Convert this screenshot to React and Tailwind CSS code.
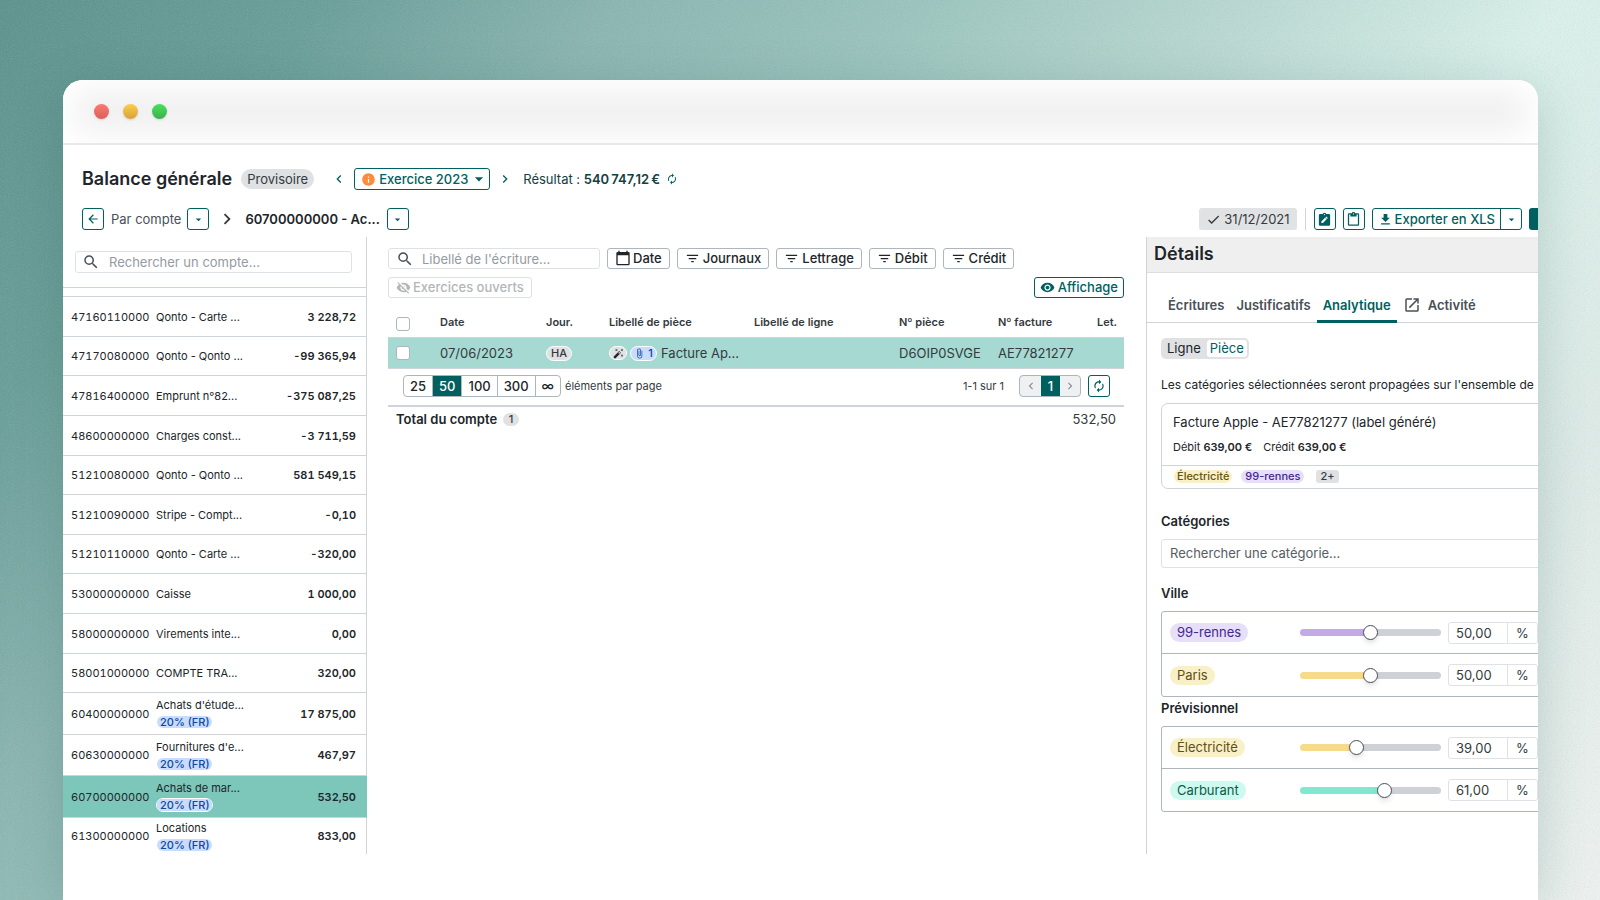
import React, { useState } from 'react';
import {
  MdArrowBack,
  MdArrowDropDown,
  MdAttachFile,
  MdAutoFixHigh,
  MdAutorenew,
  MdCheck,
  MdChevronLeft,
  MdChevronRight,
  MdContentPaste,
  MdFileDownload,
  MdFilterList,
  MdInfo,
  MdOpenInNew,
  MdSearch,
  MdVisibility,
  MdVisibilityOff,
} from 'react-icons/md';

const accounts = [
  { id: '47160110000', name: 'Qonto - Carte ...', amount: '3 228,72', height: 'h-10' },
  { id: '47170080000', name: 'Qonto - Qonto ...', amount: '-99 365,94', height: 'h-[39px]' },
  { id: '47816400000', name: 'Emprunt n°82...', amount: '-375 087,25', height: 'h-10' },
  { id: '48600000000', name: 'Charges const...', amount: '-3 711,59', height: 'h-10' },
  { id: '51210080000', name: 'Qonto - Qonto ...', amount: '581 549,15', height: 'h-[39px]' },
  { id: '51210090000', name: 'Stripe - Compt...', amount: '-0,10', height: 'h-10' },
  { id: '51210110000', name: 'Qonto - Carte ...', amount: '-320,00', height: 'h-[39px]' },
  { id: '53000000000', name: 'Caisse', amount: '1 000,00', height: 'h-10' },
  { id: '58000000000', name: 'Virements inte...', amount: '0,00', height: 'h-10' },
  { id: '58001000000', name: 'COMPTE TRA...', amount: '320,00', height: 'h-[39px]' },
  { id: '60400000000', name: "Achats d'étude...", amount: '17 875,00', tax: '20% (FR)', height: 'h-[42px]' },
  { id: '60630000000', name: "Fournitures d'e...", amount: '467,97', tax: '20% (FR)', height: 'h-[41px]' },
  { id: '60700000000', name: 'Achats de mar...', amount: '532,50', tax: '20% (FR)', height: 'h-[42px]', active: true },
  { id: '61300000000', name: 'Locations', amount: '833,00', tax: '20% (FR)', height: 'h-[36px]', last: true },
];

const iconButton =
  'flex h-[22px] w-[22px] shrink-0 items-center justify-center rounded-[3px] border border-[#005f5f] bg-white text-[#005f5f]';

const filterButton =
  'flex h-[21px] items-center rounded-[3px] border border-[#adb5bd] bg-white px-[7px] pb-px text-[13px] leading-[18px] font-medium text-[#212529]';

function TitleBar() {
  return (
    <div className="flex h-[65px] items-center gap-[14px] border-b-2 border-[#e9e9e9] bg-[#efefef] pl-[31px] shadow-[inset_0_0_32px_12px_#ffffff]">
      <span className="size-[15px] rounded-full bg-linear-to-b from-[#fb7a72] to-[#d9605a] shadow-sm" />
      <span className="size-[15px] rounded-full bg-linear-to-b from-[#fbcf4b] to-[#d9a03c] shadow-sm" />
      <span className="size-[15px] rounded-full bg-linear-to-b from-[#48e05e] to-[#3bb04c] shadow-sm" />
    </div>
  );
}

function Header() {
  return (
    <header className="flex flex-col pt-[23px] pl-[19px]">
      <div className="flex h-[22px] items-center">
        <h1 className="text-[18px] leading-[22px] font-semibold text-[#212529]">Balance générale</h1>
        <span className="ml-[9px] rounded-full bg-[#dfe1e3] px-[6px] text-[13px] leading-5 text-[#343a40]">Provisoire</span>
        <button aria-label="Exercice précédent" className="ml-[17px] text-[#005f5f]">
          <MdChevronLeft size={16} />
        </button>
        <div className="relative ml-[7px] flex h-[22px] items-center rounded-[3px] border border-[#005f5f] pl-[6px] text-[#005f5f]">
          <MdInfo size={15} className="text-[#fd8b3d]" />
          <select
            aria-label="Exercice"
            className="w-[113px] appearance-none bg-transparent pl-[3px] text-[13px] leading-5 font-medium outline-none"
          >
            <option>Exercice 2023</option>
          </select>
          <MdArrowDropDown size={20} className="pointer-events-none absolute right-0" />
        </div>
        <button aria-label="Exercice suivant" className="ml-[7px] text-[#005f5f]">
          <MdChevronRight size={16} />
        </button>
        <p className="ml-[10px] text-[13px] leading-5 text-[#14403f]">
          Résultat : <strong className="font-semibold">{'540\u202f747,12\u202f€'}</strong>
        </p>
        <button aria-label="Actualiser le résultat" className="ml-[6px] text-[#005f5f]">
          <MdAutorenew size={12} />
        </button>
      </div>
      <div className="mt-[18px] mb-[7px] flex h-[22px] items-center">
        <button aria-label="Retour" className={iconButton}>
          <MdArrowBack size={14} />
        </button>
        <span className="ml-[7px] text-[13px] leading-5 text-[#495057]">Par compte</span>
        <button aria-label="Choisir la vue" className={`${iconButton} ml-[6px]`}>
          <MdArrowDropDown size={13} />
        </button>
        <MdChevronRight size={22} className="ml-[7px] text-[#343a40]" />
        <span className="ml-[7px] text-[13px] leading-5 font-semibold text-[#212529]">60700000000 - Ac...</span>
        <button aria-label="Choisir le compte" className={`${iconButton} ml-[7px]`}>
          <MdArrowDropDown size={13} />
        </button>
        <div className="ml-auto flex items-center">
          <span className="flex h-[22px] items-center gap-[3px] rounded-[3px] bg-[#e1e2e3] px-[7px] text-[13px] leading-5 text-[#343a40]">
            <MdCheck size={15} />
            31/12/2021
          </span>
          <span className="mx-2 h-[22px] w-px bg-[#ced4da]" />
          <button aria-label="Notes" className={iconButton}>
            <svg viewBox="0 0 24 24" className="size-[15px]" fill="currentColor">
              <path d="M19 3h-4.18A3 3 0 0 0 12 1a3 3 0 0 0-2.82 2H5a2 2 0 0 0-2 2v15a2 2 0 0 0 2 2h14a2 2 0 0 0 2-2V5a2 2 0 0 0-2-2zm-7 0a1 1 0 1 1 0 2 1 1 0 0 1 0-2zM9.5 17.5H7V15l5.8-5.8 2.5 2.5zm7.4-7.4-1 1-2.5-2.5 1-1a.7.7 0 0 1 1 0l1.5 1.5a.7.7 0 0 1 0 1z" />
            </svg>
          </button>
          <button aria-label="Presse-papiers" className={`${iconButton} ml-[7px]`}>
            <MdContentPaste size={15} />
          </button>
          <div className="ml-[7px] flex h-[22px] items-center rounded-[3px] border border-[#005f5f] text-[#005f5f]">
            <button className="flex items-center gap-[2px] px-[5px] text-[13px] leading-5 font-medium">
              <MdFileDownload size={15} />
              Exporter en XLS
            </button>
            <button aria-label="Autres exports" className="flex h-5 w-[21px] items-center justify-center border-l border-[#005f5f]">
              <MdArrowDropDown size={13} />
            </button>
          </div>
          <button aria-label="Ajouter" className="ml-[7px] h-[22px] w-[41px] rounded-[3px] bg-[#005f5f]" />
        </div>
      </div>
    </header>
  );
}

function TaxBadge({ children, outlined }) {
  return (
    <span
      className={`block w-fit rounded-full border bg-[#c9dcfd] bg-clip-padding px-[3px] text-[11px] leading-3 font-medium text-[#0b4a9c] ${
        outlined ? 'border-white' : 'border-transparent'
      }`}
    >
      {children}
    </span>
  );
}

function AccountList() {
  return (
    <aside className="flex w-[304px] shrink-0 flex-col">
      <div className="border-r border-b border-[#ced4da] px-3 pt-[14px] pb-[14px]">
        <div className="mr-[2px] flex h-[22px] items-center rounded-[3px] border border-[#dee2e6] pl-[6px]">
          <MdSearch size={18} className="shrink-0 text-[#495057]" />
          <input
            type="text"
            aria-label="Rechercher un compte"
            placeholder="Rechercher un compte..."
            className="ml-[9px] w-full min-w-0 text-[13px] leading-5 outline-none placeholder:text-[#949ba2]"
          />
        </div>
      </div>
      <div className="h-[9px] border-r border-b border-[#ced4da]" />
      <table className="w-full table-fixed border-separate border-spacing-0 text-[11px] leading-[14px] text-[#212529]">
        <tbody>
          {accounts.map((a) => {
            const line = a.last ? '' : 'border-b';
            return (
              <tr key={a.id} className={`${a.height} ${a.active ? 'bg-[#7cc6ba]' : ''}`}>
                <td className={`w-[93px] border-[#ced4da] py-0 pl-[8px] tabular-nums ${line}`}>{a.id}</td>
                <td className={`border-[#ced4da] p-0 whitespace-nowrap ${line}`}>
                  <div className="flex flex-col gap-[3px]">
                    {a.name}
                    {a.tax && <TaxBadge outlined={a.active}>{a.tax}</TaxBadge>}
                  </div>
                </td>
                <td
                  className={`w-[100px] border-r py-0 pr-[10px] text-right font-semibold whitespace-nowrap tabular-nums ${line} ${
                    a.active ? 'border-r-[#7cc6ba] border-b-[#ced4da]' : 'border-[#ced4da]'
                  }`}
                >
                  {a.amount}
                </td>
              </tr>
            );
          })}
        </tbody>
      </table>
    </aside>
  );
}

function Checkbox({ label }) {
  return (
    <input
      type="checkbox"
      aria-label={label}
      className="block size-[14px] appearance-none rounded-[3px] border border-[#adb5bd] bg-white checked:bg-[#005f5f]"
    />
  );
}

function Entries() {
  const pageSizes = ['25', '50', '100', '300'];
  return (
    <main className="flex min-w-0 flex-1 flex-col pt-[11px] pr-[22px] pl-[21px]">
      <div className="flex items-center gap-[7px]">
        <div className="flex h-[21px] w-[212px] items-center rounded-[3px] border border-[#dee2e6] pl-[7px]">
          <MdSearch size={18} className="shrink-0 text-[#495057]" />
          <input
            type="text"
            aria-label="Libellé de l'écriture"
            placeholder="Libellé de l'écriture..."
            className="ml-[8px] w-full min-w-0 text-[13px] leading-[18px] outline-none placeholder:text-[#949ba2]"
          />
        </div>
        <button className={filterButton}>
          <svg viewBox="0 0 24 24" className="mr-[2px] size-4" fill="currentColor">
            <path d="M20 3h-1V1h-2v2H7V1H5v2H4a2 2 0 0 0-2 2v16c0 1.100.9 2 2 2h16a2 2 0 0 0 2-2V5a2 2 0 0 0-2-2zm0 18H4V8h16z" />
          </svg>
          Date
        </button>
        {['Journaux', 'Lettrage', 'Débit', 'Crédit'].map((f) => (
          <button key={f} className={filterButton}>
            <MdFilterList size={15} className="mr-[3px]" />
            {f}
          </button>
        ))}
      </div>
      <div className="mt-2 flex items-center justify-between">
        <button
          disabled
          className="flex h-[21px] items-center gap-[2px] rounded-[3px] border border-[#dee2e6] px-[7px] pb-px text-[13px] leading-[18px] font-medium text-[#b3b6b9]"
        >
          <MdVisibilityOff size={15} />
          Exercices ouverts
        </button>
        <button className="flex h-[21px] items-center gap-[3px] rounded-[3px] border border-[#005f5f] px-[5px] pb-px text-[13px] leading-[18px] font-medium text-[#005f5f]">
          <MdVisibility size={15} />
          Affichage
        </button>
      </div>

      <table className="mt-[9px] w-full table-fixed border-separate border-spacing-0 text-left whitespace-nowrap">
        <thead className="text-[11px] leading-[14px] text-[#343a40]">
          <tr className="h-[31px] *:border-b *:border-[#ced4da] *:p-0 *:pl-2 *:font-semibold">
            <th className="w-11 !pt-[3px]">
              <Checkbox label="Tout sélectionner" />
            </th>
            <th className="w-[106px]">Date</th>
            <th className="w-[63px]">Jour.</th>
            <th>Libellé de pièce</th>
            <th>Libellé de ligne</th>
            <th className="w-[99px]">Nº pièce</th>
            <th className="w-[99px]">Nº facture</th>
            <th className="w-[35px]">Let.</th>
          </tr>
        </thead>
        <tbody className="text-[13px] leading-[18px] text-[#343a40]">
          <tr className="h-[31px] bg-[#a6d9d1] *:border-b *:border-[#ced4da] *:p-0 *:pl-2">
            <td>
              <Checkbox label="Sélectionner la ligne" />
            </td>
            <td>07/06/2023</td>
            <td>
              <span className="block w-fit rounded-full border border-white bg-[#dfe1e3] px-1 text-[11px] leading-[13px] font-medium">HA</span>
            </td>
            <td>
              <div className="flex items-center">
                <span className="flex h-[14px] w-[18px] items-center justify-center rounded-full border border-white bg-[#dfe1e3] text-[#212529]">
                  <MdAutoFixHigh size={11} />
                </span>
                <span className="ml-[3px] flex h-[15px] w-[27px] items-center justify-center gap-[3px] rounded-full border border-white bg-[#c9dcfd] text-[11px] leading-[13px] font-medium text-[#0b4a9c]">
                  <MdAttachFile size={11} />1
                </span>
                <span className="ml-[4px]">Facture Ap...</span>
              </div>
            </td>
            <td />
            <td>D6OIP0SVGE</td>
            <td>AE77821277</td>
            <td />
          </tr>
        </tbody>
      </table>

      <div className="mt-[6px] flex h-[22px] items-center pr-[14px] pl-[15px]">
        <div className="flex h-[22px] divide-x divide-[#adb5bd] overflow-hidden rounded-[4px] border border-[#adb5bd] text-[13px] leading-5 font-medium text-[#212529]">
          {pageSizes.map((s) => (
            <button key={s} className={s === '50' ? 'bg-[#005f5f] px-[6px] text-white' : 'px-[6px]'}>
              {s}
            </button>
          ))}
          <button className="px-[6px]">∞</button>
        </div>
        <span className="ml-1 text-[11px] leading-[14px] text-[#343a40]">éléments par page</span>
        <span className="ml-auto text-[11px] leading-[14px] text-[#343a40]">1-1 sur 1</span>
        <div className="ml-[15px] flex h-[22px] overflow-hidden rounded-[4px] border border-[#adb5bd] bg-[#eff0f1] text-[13px] leading-5 text-[#868e96]">
          <button disabled aria-label="Page précédente" className="flex w-[21px] items-center justify-center">
            <MdChevronLeft size={14} />
          </button>
          <button className="w-[19px] bg-[#005f5f] font-medium text-white">1</button>
          <button disabled aria-label="Page suivante" className="flex w-5 items-center justify-center">
            <MdChevronRight size={14} />
          </button>
        </div>
        <button aria-label="Actualiser" className={`${iconButton} ml-[7px]`}>
          <MdAutorenew size={14} />
        </button>
      </div>

      <div className="mt-2 flex items-center border-t-2 border-[#ced4da] px-2 pt-[3px]">
        <span className="text-[13px] leading-[18px] font-semibold text-[#212529]">Total du compte</span>
        <span className="ml-[6px] w-4 rounded-full bg-[#dfe1e3] text-center text-[11px] leading-[13px] font-medium text-[#343a40]">1</span>
        <span className="ml-auto text-[13px] leading-[18px] text-[#343a40]">532,50</span>
      </div>
    </main>
  );
}

function Allocation({ label, badge, color, initial }) {
  const [value, setValue] = useState(initial);
  return (
    <div className="flex h-[42px] items-center border-b border-[#adb5bd] pl-2 last:border-b-0">
      <span className={`rounded-full px-[7px] text-[13px] leading-[19px] ${badge}`}>{label}</span>
      <input
        type="range"
        min="0"
        max="100"
        value={value}
        onChange={(e) => setValue(Number(e.target.value))}
        aria-label={`Répartition ${label}`}
        style={{ background: `linear-gradient(to right, ${color} ${value}%, #ced2d6 ${value}%)` }}
        className="ml-auto h-[7px] w-[141px] appearance-none rounded-full [&::-webkit-slider-thumb]:size-[15px] [&::-webkit-slider-thumb]:appearance-none [&::-webkit-slider-thumb]:rounded-full [&::-webkit-slider-thumb]:border [&::-webkit-slider-thumb]:border-[#495057] [&::-webkit-slider-thumb]:bg-white [&::-webkit-slider-thumb]:shadow-md"
      />
      <div className="mr-[31px] ml-[7px] flex h-[22px] items-center rounded-[3px] border border-[#dee2e6] text-[13px] leading-5 text-[#343a40]">
        <input
          type="text"
          readOnly
          aria-label={`Pourcentage ${label}`}
          value={`${value},00`}
          className="h-5 w-[59px] border-r border-[#dee2e6] pl-[7px] outline-none"
        />
        <span className="w-[29px] text-center">%</span>
      </div>
    </div>
  );
}

function Details() {
  const tab = 'flex h-[38px] items-center border-b-3 px-[6px] pt-[4px]';
  return (
    <aside className="flex w-[424px] shrink-0 flex-col overflow-hidden border-l border-[#ced4da] text-[#212529]">
      <h2 className="border-b border-[#dcdee0] bg-[#efefef] pb-[2px] pl-[7px] text-[18px] leading-[33px] font-semibold">Détails</h2>
      <nav className="mt-3 flex h-[38px] border-b border-[#ced4da] pl-[15px] text-[13px] leading-[18px] font-semibold text-[#495057]">
        <a href="#ecritures" className={`${tab} border-transparent`}>Écritures</a>
        <a href="#justificatifs" className={`${tab} border-transparent`}>Justificatifs</a>
        <a href="#analytique" className={`${tab} border-[#005f5f] text-[#005f5f]`}>Analytique</a>
        <a href="#activite" className={`${tab} gap-[7px] border-transparent`}>
          <MdOpenInNew size={18} />
          Activité
        </a>
      </nav>
      <div className="flex flex-col pl-[14px]">
        <div className="mt-[15px] flex h-[21px] w-fit items-center rounded-[5px] bg-[#dfe1e3] p-[2px] text-[13px] leading-[17px]">
          <button className="px-1">Ligne</button>
          <button className="ml-[2px] rounded-[3px] bg-white px-[3px] text-[#005f5f]">Pièce</button>
        </div>
        <p className="mt-[17px] text-[12px] leading-[18px] whitespace-nowrap">
          Les catégories sélectionnées seront propagées sur l'ensemble de
        </p>
        <section className="mt-[9px] rounded-[7px] border border-[#ced4da]">
          <div className="flex flex-col gap-[9px] border-b border-[#ced4da] px-[11px] pt-[9px] pb-[11px]">
            <h3 className="text-[13px] leading-[18px]">Facture Apple - AE77821277 (label généré)</h3>
            <p className="flex gap-[11px] text-[11px] leading-[14px]">
              <span>Débit <strong className="font-semibold">639,00 €</strong></span>
              <span>Crédit <strong className="font-semibold">639,00 €</strong></span>
            </p>
          </div>
          <div className="flex h-[22px] items-center pb-[2px] pl-3 text-[11px] leading-[13px] font-medium">
            <span className="rounded-full bg-[#faf0c8] px-[3px] text-[#665511]">Électricité</span>
            <span className="ml-[9px] rounded-full bg-[#e6dff7] px-1 text-[#43268f]">99-rennes</span>
            <span className="ml-[12px] rounded-[3px] bg-[#dfe1e3] px-1 text-[#343a40]">2+</span>
          </div>
        </section>
        <label htmlFor="category-search" className="mt-[23px] text-[13px] leading-[18px] font-semibold">Catégories</label>
        <input
          id="category-search"
          type="text"
          placeholder="Rechercher une catégorie..."
          className="mt-[9px] h-[29px] rounded-[3px] border border-[#dee2e6] px-2 pb-px text-[13px] leading-5 outline-none placeholder:text-[#565d64]"
        />
        <h3 className="mt-4 text-[13px] leading-[18px] font-semibold">Ville</h3>
        <div className="mt-[9px] rounded-[3px] border border-[#adb5bd]">
          <Allocation label="99-rennes" badge="bg-[#e6dff7] text-[#43268f]" color="#c1aae6" initial={50} />
          <Allocation label="Paris" badge="bg-[#faf0c8] text-[#5c4f16]" color="#f8da8b" initial={50} />
        </div>
        <h3 className="mt-[2px] text-[13px] leading-[18px] font-semibold">Prévisionnel</h3>
        <div className="mt-[9px] rounded-[3px] border border-[#adb5bd]">
          <Allocation label="Électricité" badge="bg-[#faf0c8] text-[#5c4f16]" color="#f8da8b" initial={39} />
          <Allocation label="Carburant" badge="bg-[#cdf9ee] text-[#0a5c49]" color="#80e8cf" initial={61} />
        </div>
      </div>
    </aside>
  );
}

export default function App() {
  return (
    <div className="relative flex min-h-screen flex-col overflow-hidden bg-[linear-gradient(128deg,#58908b_0%,#659d97_14%,#88b5b1_27%,#99c5be_40%,#b9dad3_54%,#dcf4ed_68%,#e0eeea_84%,#f0f5f3_100%)] px-[62px] pt-20 font-['Inter',sans-serif]">
      <svg className="pointer-events-none absolute inset-0 size-full opacity-20" aria-hidden="true">
        <filter id="grain">
          <feTurbulence type="fractalNoise" baseFrequency="0.7" numOctaves="2" />
          <feColorMatrix type="saturate" values="0" />
        </filter>
        <rect width="100%" height="100%" filter="url(#grain)" />
      </svg>
      <div className="relative ml-px flex flex-1 flex-col overflow-hidden rounded-t-[20px] bg-white shadow-[0_8px_50px_rgba(20,80,72,0.2)]">
        <TitleBar />
        <div className="-mr-8 flex flex-col">
          <Header />
          <div className="flex">
            <AccountList />
            <Entries />
            <Details />
          </div>
        </div>
      </div>
    </div>
  );
}
